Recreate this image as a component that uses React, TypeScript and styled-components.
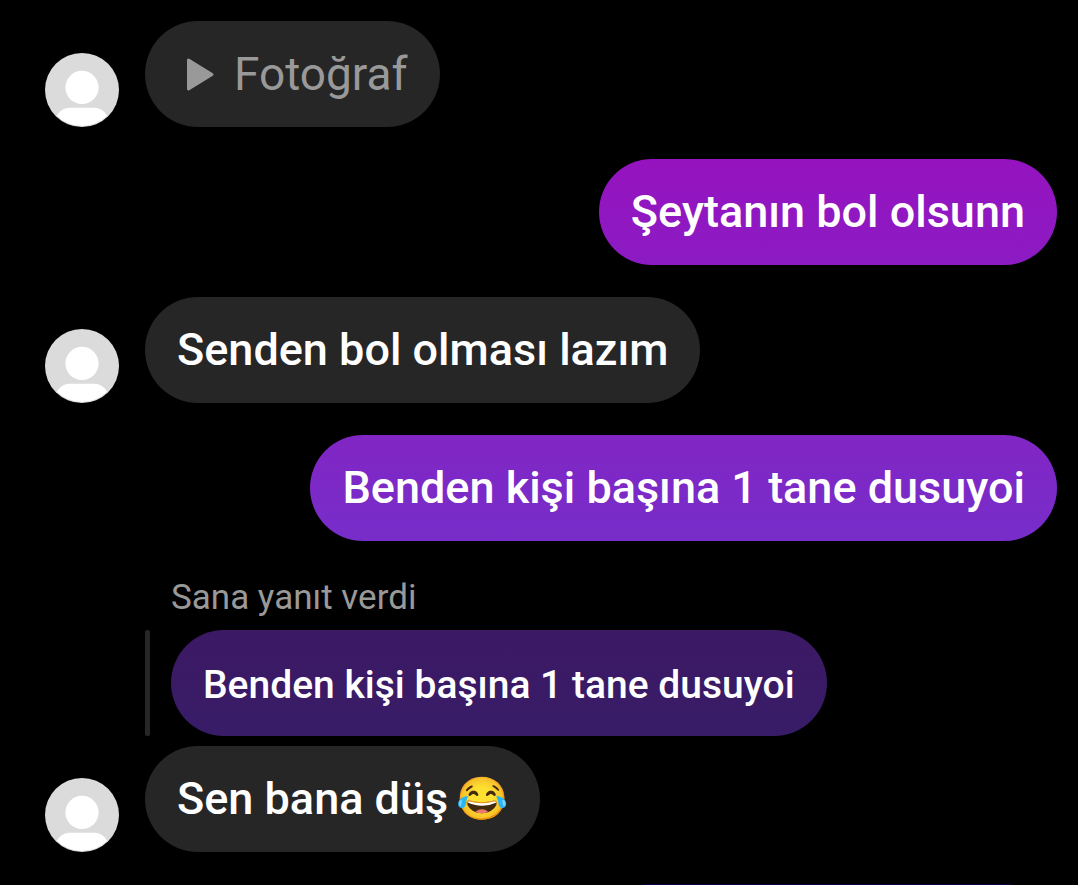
import React from 'react';
import styled, { createGlobalStyle } from 'styled-components';

const GlobalStyle = createGlobalStyle`
  *, *::before, *::after {
    box-sizing: border-box;
  }
  body {
    margin: 0;
    background: #000000;
    font-family: Roboto, 'Noto Sans', sans-serif;
  }
`;

const Thread = styled.main`
  min-height: 100vh;
  overflow: hidden;
  background: #000000;
`;

const Messages = styled.ol`
  list-style: none;
  margin: 0;
  padding: 21px 21px 0 45px;
  display: flex;
  flex-direction: column;
  gap: 32px;
`;

const Message = styled.li<{ $own?: boolean }>`
  display: flex;
  align-items: flex-end;
  justify-content: ${(p) => (p.$own ? 'flex-end' : 'flex-start')};
  gap: 26px;
`;

const Avatar = styled.svg`
  width: 74px;
  height: 74px;
  flex: none;
`;

const Content = styled.div`
  display: flex;
  flex-direction: column;
  align-items: flex-start;
  gap: 10px;
`;

const Bubble = styled.div<{ $from?: string; $to?: string }>`
  display: flex;
  align-items: center;
  padding: 26px 32px;
  border-radius: 53px;
  background: ${(p) =>
    p.$from ? `linear-gradient(${p.$from}, ${p.$to})` : '#262626'};
  color: #ffffff;
  font-size: 45px;
  font-weight: 500;
  line-height: 54px;
`;

const QuotedBubble = styled(Bubble)`
  padding: 28px 32px 24px;
  font-size: 39px;
`;

const MediaBubble = styled(Bubble)`
  gap: 8px;
  color: #999999;
  font-size: 46px;
  font-weight: 400;
`;

const PlayIcon = styled.svg`
  width: 49px;
  height: 49px;
  flex: none;
`;

const ReplyLabel = styled.div`
  padding: 3px 0 0 26px;
  color: #999999;
  font-size: 35px;
  line-height: 44px;
`;

const Quote = styled.blockquote`
  margin: 0;
  display: flex;
  gap: 21px;
`;

const QuoteBar = styled.span`
  width: 5px;
  border-radius: 2px;
  background: #262626;
`;

const Emoji = styled.span`
  margin-left: 8px;
  font-size: 42px;
`;

const NextMessage = styled.div`
  width: 34%;
  height: 1px;
  margin: 32px 66px 0 auto;
  background: #06004d;
`;

function ProfilePicture() {
  return (
    <Avatar viewBox="0 0 74 74" role="img" aria-label="Profil">
      <defs>
        <clipPath id="face">
          <circle cx="37" cy="37" r="36" />
        </clipPath>
      </defs>
      <circle cx="37" cy="37" r="37" fill="#dbdbdb" />
      <circle cx="37" cy="34.4" r="16.6" fill="#ffffff" />
      <path
        clipPath="url(#face)"
        d="M8 74C10 62 16 54.8 25 54.8H49C58 54.8 64 62 66 74Z"
        fill="#ffffff"
      />
    </Avatar>
  );
}

export default function App() {
  return (
    <>
      <GlobalStyle />
      <Thread>
        <Messages>
          <Message>
            <ProfilePicture />
            <MediaBubble>
              <PlayIcon viewBox="0 0 49 49" aria-hidden="true">
                <path
                  d="M11.500 10L35 24.500L11.500 39Z"
                  fill="#999999"
                  stroke="#999999"
                  strokeWidth="3"
                  strokeLinejoin="round"
                />
              </PlayIcon>
              Fotoğraf
            </MediaBubble>
          </Message>

          <Message $own>
            <Bubble $from="#9513bf" $to="#8c1bc3">Şeytanın bol olsunn</Bubble>
          </Message>

          <Message>
            <ProfilePicture />
            <Bubble>Senden bol olması lazım</Bubble>
          </Message>

          <Message $own>
            <Bubble $from="#8126c5" $to="#772dc9">
              Benden kişi başına 1 tane dusuyoi
            </Bubble>
          </Message>

          <Message>
            <ProfilePicture />
            <Content>
              <ReplyLabel>Sana yanıt verdi</ReplyLabel>
              <Quote>
                <QuoteBar />
                <QuotedBubble $from="#3c1965" $to="#381c67">
                  Benden kişi başına 1 tane dusuyoi
                </QuotedBubble>
              </Quote>
              <Bubble>
                Sen bana düş<Emoji>😂</Emoji>
              </Bubble>
            </Content>
          </Message>
        </Messages>
        <NextMessage />
      </Thread>
    </>
  );
}
